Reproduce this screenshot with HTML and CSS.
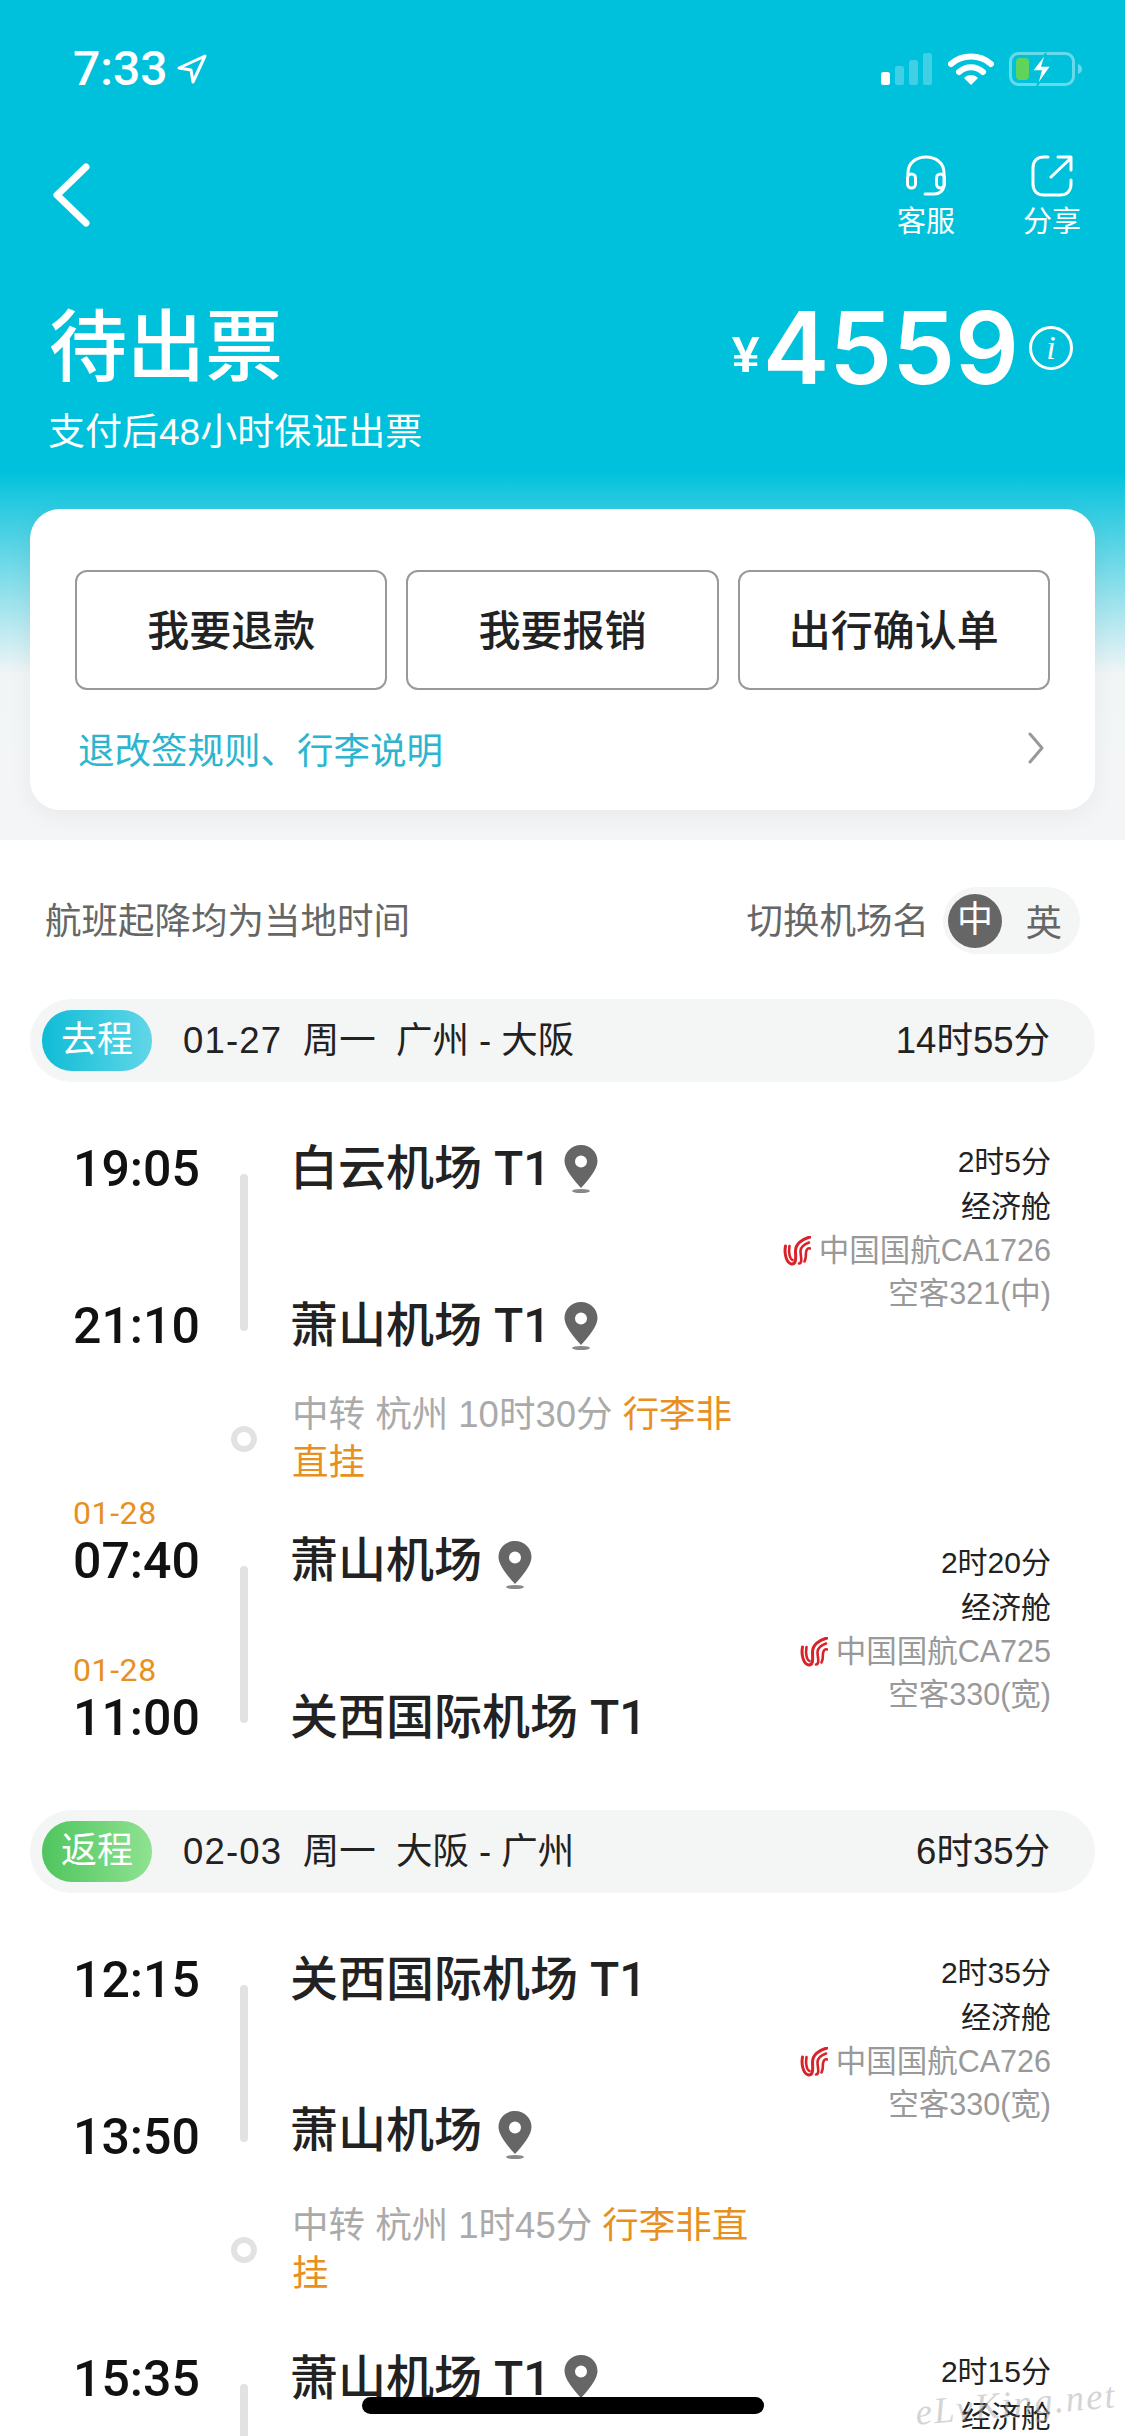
FILE: index.html
```html
<!DOCTYPE html>
<html lang="zh-CN">
<head>
    <meta charset="UTF-8">
    <meta name="viewport" content="width=device-width, initial-scale=1.0">
    <title>待出票</title>
    <link rel="stylesheet" href="styles.css">
</head>
<body>
<div class="page">
    <svg width="0" height="0" class="defs">
        <symbol id="pin" viewBox="0 0 34 48">
            <path fill="#666" fill-rule="evenodd" d="M17 0C7.6 0 0.5 7 0.5 16.2 0.5 24 10 35.5 17 43 24 35.5 33.500 24 33.500 16.200 33.500 7 26.400 0 17 0ZM17 10.500A6 6 0 1 1 17 22.500 6 6 0 1 1 17 10.500Z"/>
            <ellipse cx="17" cy="46" rx="9" ry="2" fill="#888"/>
        </symbol>
        <symbol id="airline" viewBox="0 0 28 30">
            <g fill="none" stroke="#d8232a" stroke-linecap="round">
                <path stroke-width="3" d="M2.500 10C1 18 3.500 27 8.500 28 14 28.500 12.500 20 12.500 15 12.500 8 19 3 27 1"/>
                <path stroke-width="2.600" d="M6.500 10C5.500 16 6.500 23 9.500 24"/>
                <path stroke-width="2.600" d="M16 27.500C20 27 17.500 20 17.500 15 17.500 11 22 8 26 6.500"/>
                <path stroke-width="2.600" d="M21.500 25.500C24 22 22 17 23.500 14.500 24.500 12 26 12 27 12.500"/>
            </g>
        </symbol>
    </svg>

    <header class="hero">
        <div class="status-bar">
            <div class="clock">
                <span>7:33</span>
                <svg width="32" height="32" viewBox="0 0 32 32"><path d="M29 3 3 15l12 2 2 12z" fill="none" stroke="#fff" stroke-width="3" stroke-linejoin="round"/></svg>
            </div>
            <div class="status-icons">
                <svg width="52" height="34" viewBox="0 0 52 34">
                    <rect x="0" y="20" width="9" height="13" rx="2.500" fill="#fff"/>
                    <rect x="14" y="14" width="9" height="19" rx="2.500" fill="#fff" opacity=".25"/>
                    <rect x="28" y="8" width="9" height="25" rx="2.500" fill="#fff" opacity=".25"/>
                    <rect x="42" y="1" width="9" height="32" rx="2.500" fill="#fff" opacity=".25"/>
                </svg>
                <svg width="46" height="34" viewBox="0 0 46 34">
                    <path d="M3 12C14 2 32 2 43 12" fill="none" stroke="#fff" stroke-width="6" stroke-linecap="round"/>
                    <path d="M11 20C18 13.500 28 13.500 35 20" fill="none" stroke="#fff" stroke-width="6" stroke-linecap="round"/>
                    <path d="M16 26C20 22 26 22 30 26L23 33Z" fill="#fff"/>
                </svg>
                <svg width="74" height="34" viewBox="0 0 74 34">
                    <rect x="1.500" y="1.500" width="63" height="31" rx="8" fill="none" stroke="#fff" stroke-opacity=".4" stroke-width="3"/>
                    <path d="M69 12c3 1 4 3 4 5s-1 4-4 5z" fill="#fff" fill-opacity=".4"/>
                    <rect x="7" y="6" width="13" height="22" rx="4" fill="#5fd35a"/>
                    <path d="M37 1 23 19h9l-4 15 14-20h-9z" fill="#fff" stroke="#00c1dc" stroke-width="1.500"/>
                </svg>
            </div>
        </div>

        <div class="nav-bar">
            <svg class="back" width="38" height="64" viewBox="0 0 38 64"><path d="M34 4 5 32l29 28" fill="none" stroke="#fff" stroke-width="7" stroke-linecap="round" stroke-linejoin="round"/></svg>
            <div class="nav-tools">
                <div class="tool">
                    <svg width="42" height="42" viewBox="0 0 42 42" fill="none" stroke="#fff" stroke-width="3" stroke-linecap="round">
                        <path d="M3 20V18C3 8 11 2 21 2S39 8 39 18V30C39 36 34 39 29 39H20"/>
                        <rect x="2.500" y="19" width="8" height="14" rx="4"/>
                        <rect x="31.500" y="19" width="8" height="14" rx="4"/>
                    </svg>
                    <span>客服</span>
                </div>
                <div class="tool">
                    <svg width="42" height="42" viewBox="0 0 42 42" fill="none" stroke="#fff" stroke-width="3" stroke-linecap="round" stroke-linejoin="round">
                        <path d="M17 2H13C6 2 2 6 2 13V29C2 36 6 40 13 40H29C36 40 40 36 40 29V25"/>
                        <path d="M20 22 40 3M27 2H40V15"/>
                    </svg>
                    <span>分享</span>
                </div>
            </div>
        </div>

        <div class="title-row">
            <h1>待出票</h1>
            <div class="price">
                <span class="yen">¥</span><span class="amount">4559</span><span class="price-info">i</span>
            </div>
        </div>
        <p class="subtitle">支付后48小时保证出票</p>

        <section class="card">
            <div class="actions">
                <button class="btn">我要退款</button>
                <button class="btn">我要报销</button>
                <button class="btn">出行确认单</button>
            </div>
            <div class="rules">
                <span>退改签规则、行李说明</span>
                <svg width="18" height="32" viewBox="0 0 18 32"><path d="M3 2 15 16 3 30" fill="none" stroke="#999" stroke-width="3" stroke-linecap="round" stroke-linejoin="round"/></svg>
            </div>
        </section>
    </header>

    <main class="content">
        <div class="notice">
            <span>航班起降均为当地时间</span>
            <div class="switch">
                <span>切换机场名</span>
                <div class="toggle">
                    <span class="toggle-on">中</span>
                    <span class="toggle-off">英</span>
                </div>
            </div>
        </div>

        <div class="segment">
            <span class="badge badge-go">去程</span>
            <span class="segment-text"><span class="segment-date">01-27</span>&nbsp; 周一&nbsp; 广州 - 大阪</span>
            <span class="segment-time">14时55分</span>
        </div>

        <div class="leg leg-first">
            <div class="route">
                <div class="time">19:05</div>
                <div class="rail"></div>
                <div class="airport">白云机场 T1<svg class="pin"><use href="#pin"/></svg></div>
                <div class="time">21:10</div>
                <div class="airport">萧山机场 T1<svg class="pin"><use href="#pin"/></svg></div>
            </div>
            <div class="info">
                <div>2时5分</div>
                <div>经济舱</div>
                <div class="info-sub"><svg class="logo"><use href="#airline"/></svg>中国国航CA1726</div>
                <div class="info-sub">空客321(中)</div>
            </div>
        </div>

        <div class="transfer">
            <span class="ring"></span>
            <p>中转 杭州 10时30分 <em>行李非</em><br><em>直挂</em></p>
        </div>

        <div class="leg leg-after">
            <div class="route">
                <div class="time"><div class="date">01-28</div>07:40</div>
                <div class="rail"></div>
                <div class="airport">萧山机场<svg class="pin pin-spaced"><use href="#pin"/></svg></div>
                <div class="time"><div class="date">01-28</div>11:00</div>
                <div class="airport">关西国际机场 T1</div>
            </div>
            <div class="info info-low">
                <div>2时20分</div>
                <div>经济舱</div>
                <div class="info-sub"><svg class="logo"><use href="#airline"/></svg>中国国航CA725</div>
                <div class="info-sub">空客330(宽)</div>
            </div>
        </div>

        <div class="segment segment-back">
            <span class="badge badge-back">返程</span>
            <span class="segment-text"><span class="segment-date">02-03</span>&nbsp; 周一&nbsp; 大阪 - 广州</span>
            <span class="segment-time">6时35分</span>
        </div>

        <div class="leg leg-first">
            <div class="route">
                <div class="time">12:15</div>
                <div class="rail"></div>
                <div class="airport">关西国际机场 T1</div>
                <div class="time">13:50</div>
                <div class="airport airport-raised">萧山机场<svg class="pin pin-spaced"><use href="#pin"/></svg></div>
            </div>
            <div class="info">
                <div>2时35分</div>
                <div>经济舱</div>
                <div class="info-sub"><svg class="logo"><use href="#airline"/></svg>中国国航CA726</div>
                <div class="info-sub">空客330(宽)</div>
            </div>
        </div>

        <div class="transfer">
            <span class="ring"></span>
            <p>中转 杭州 1时45分 <em>行李非直</em><br><em>挂</em></p>
        </div>

        <div class="leg leg-last">
            <div class="route">
                <div class="time">15:35</div>
                <div class="rail"></div>
                <div class="airport">萧山机场 T1<svg class="pin"><use href="#pin"/></svg></div>
            </div>
            <div class="info">
                <div>2时15分</div>
                <div>经济舱</div>
            </div>
        </div>
    </main>

    <div class="home-indicator"></div>
    <div class="watermark">eLvKing.net</div>
</div>
</body>
</html>
```
FILE: styles.css
```css
* {
    margin: 0;
    padding: 0;
    box-sizing: border-box;
}

body {
    font-family: "Liberation Sans", "Noto Sans CJK SC", sans-serif;
    color: #222;
    background: #fff;
}

.page {
    position: relative;
    width: 1125px;
    height: 2436px;
    overflow: hidden;
}

.defs {
    position: absolute;
}

/* Top area */
.hero {
    height: 840px;
    padding-top: 1px;
    color: #fff;
    background: linear-gradient(#00c1dc 0, #00c1dc 470px, #f2f5f6 675px, #f4f5f6 840px);
}

.status-bar {
    height: 135px;
    padding: 0 42px 0 73px;
    display: flex;
    align-items: center;
    justify-content: space-between;
}

.clock {
    display: flex;
    align-items: center;
    gap: 8px;
    font-family: Roboto, sans-serif;
    font-size: 48px;
    font-weight: 500;
}

.status-icons {
    display: flex;
    align-items: center;
    gap: 15px;
}

.nav-bar {
    height: 124px;
    padding: 0 44px 0 52px;
    display: flex;
    justify-content: space-between;
    align-items: center;
}

.back {
    margin-bottom: 6px;
}

.nav-tools {
    display: flex;
    gap: 68px;
}

.tool {
    display: flex;
    flex-direction: column;
    align-items: center;
    font-size: 29px;
    line-height: 40px;
    gap: 5px;
    width: 58px;
}

.title-row {
    margin-top: 33px;
    height: 110px;
    padding: 0 52px 0 49px;
    display: flex;
    justify-content: space-between;
    align-items: center;
}

h1 {
    font-size: 78px;
    font-weight: 500;
    line-height: 110px;
}

.price {
    display: flex;
    align-items: center;
}

.yen {
    font-size: 50px;
    font-weight: 700;
    margin: 14px 3px 0 0;
}

.amount {
    font-family: Inter, sans-serif;
    font-size: 100px;
    font-weight: 600;
    line-height: 110px;
}

.price-info {
    width: 44px;
    height: 44px;
    margin: 0 0 0 10px;
    border: 3px solid #fff;
    border-radius: 50%;
    text-align: center;
    font-family: "Liberation Serif", serif;
    font-style: italic;
    font-size: 34px;
    line-height: 38px;
}

.subtitle {
    margin-top: 5px;
    padding-left: 48px;
    font-size: 37px;
    line-height: 50px;
}

.card {
    margin: 51px 30px 0;
    height: 301px;
    padding: 61px 45px 0;
    background: #fff;
    border-radius: 30px;
    box-shadow: 0 6px 24px rgba(0, 0, 0, 0.05);
}

.actions {
    display: flex;
    gap: 19px;
}

.btn {
    flex: 1;
    height: 120px;
    padding-bottom: 5px;
    background: #fff;
    border: 2px solid #999;
    border-radius: 12px;
    font-family: inherit;
    font-size: 42px;
    font-weight: 500;
    color: #222;
}

.rules {
    margin-top: 33px;
    padding: 0 5px 0 3px;
    height: 50px;
    display: flex;
    justify-content: space-between;
    align-items: center;
    font-size: 36.500px;
    color: #2cb5cf;
}

/* Flight list */
.notice {
    height: 67px;
    margin-top: 47px;
    padding: 0 45px 0 45px;
    display: flex;
    justify-content: space-between;
    align-items: center;
    font-size: 36.500px;
    color: #666;
}

.notice > span,
.switch > span {
    margin-top: -5px;
}

.switch {
    display: flex;
    align-items: center;
    gap: 14px;
}

.toggle {
    width: 137px;
    height: 67px;
    padding: 0 18px 0 5px;
    display: flex;
    justify-content: space-between;
    align-items: center;
    background: #f4f5f5;
    border-radius: 34px;
}

.toggle-on {
    width: 54px;
    height: 54px;
    border-radius: 50%;
    background: #666;
    color: #fff;
    font-size: 36px;
    text-align: center;
    line-height: 52px;
}

.segment {
    margin: 45px 30px 0;
    height: 83px;
    padding: 0 45px 0 12px;
    display: flex;
    align-items: center;
    background: #f4f5f5;
    border-radius: 42px;
    font-size: 36.500px;
}

.segment-back {
    margin-top: 62px;
}

.badge {
    width: 110px;
    height: 61px;
    margin-right: 31px;
    border-radius: 30px;
    color: #fff;
    font-size: 36px;
    text-align: center;
    line-height: 60px;
}

.badge-go {
    background: linear-gradient(90deg, #0fbcd6, #62d6e8);
}

.badge-back {
    background: linear-gradient(90deg, #4fc55e, #8fe291);
}

.segment-text {
    margin-top: -6px;
}

.segment-date {
    letter-spacing: 1.200px;
}

.segment-time {
    margin: -6px 0 0 auto;
}

.leg {
    padding: 0 74px 0 73px;
    display: flex;
    justify-content: space-between;
}

.leg-first {
    margin-top: 57px;
}

.leg-after {
    margin-top: 44px;
}

.leg-last {
    margin-top: 51px;
}

.route {
    display: grid;
    grid-template-columns: 167px 8px 42px auto;
    grid-template-rows: 60px 60px;
    row-gap: 97px;
}

.time {
    grid-column: 1;
    align-self: end;
    font-family: Roboto, sans-serif;
    font-size: 50px;
    font-weight: 500;
    line-height: 60px;
    color: #111;
}

.date {
    font-size: 32px;
    font-weight: 400;
    line-height: 36px;
    letter-spacing: 0.6px;
    color: #e8901f;
}

.rail {
    grid-column: 2;
    grid-row: 1 / 3;
    margin: 35px 0 25px;
    background: #e2e2e2;
    border-radius: 4px;
}

.airport {
    grid-column: 4;
    display: flex;
    align-items: center;
    font-family: Roboto, "Noto Sans CJK SC", sans-serif;
    font-size: 48px;
    font-weight: 500;
    line-height: 60px;
    white-space: pre;
}

.airport-raised {
    align-self: start;
    margin-top: -6px;
}

.pin {
    width: 34px;
    height: 48px;
    margin-left: 14px;
}

.pin-spaced {
    margin-left: 16px;
    margin-top: 8px;
}

.info {
    text-align: right;
    font-size: 30px;
    line-height: 45px;
}

.info-low {
    margin-top: 9px;
}

.info-sub {
    font-size: 30.500px;
    line-height: 43px;
    color: #999;
    display: flex;
    justify-content: flex-end;
    align-items: center;
}

.logo {
    width: 28px;
    height: 30px;
    margin-right: 8px;
}

.transfer {
    margin-top: 35px;
    padding-left: 231px;
    display: flex;
    align-items: center;
    gap: 35px;
}

.ring {
    width: 26px;
    height: 26px;
    border: 6px solid #e2e2e2;
    border-radius: 50%;
}

.transfer p {
    font-size: 36.500px;
    line-height: 48px;
    color: #aaa;
}

.transfer em {
    font-style: normal;
    color: #e8901f;
}

/* Overlays */
.home-indicator {
    position: absolute;
    left: 362px;
    top: 2397px;
    width: 402px;
    height: 17px;
    background: #000;
    border-radius: 9px;
}

.watermark {
    position: absolute;
    right: 8px;
    top: 2382px;
    font-family: "Liberation Serif", serif;
    font-style: italic;
    font-size: 37px;
    letter-spacing: 2px;
    color: rgba(170, 170, 170, 0.5);
    transform: rotate(-5deg);
}
```
